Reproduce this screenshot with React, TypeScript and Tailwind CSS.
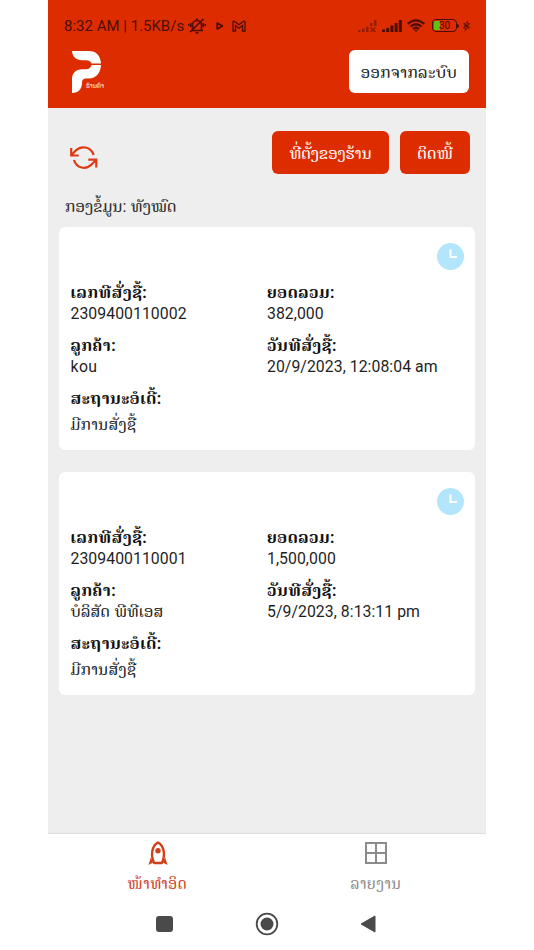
import type { ReactNode } from "react";

const orders = [
  {
    id: "2309400110002",
    total: "382,000",
    customer: "kou",
    date: "20/9/2023, 12:08:04 am",
    status: "ມີການສັ່ງຊື້",
  },
  {
    id: "2309400110001",
    total: "1,500,000",
    customer: "ບໍລິສັດ ພີທີເອສ",
    date: "5/9/2023, 8:13:11 pm",
    status: "ມີການສັ່ງຊື້",
  },
];

const StatusBar = () => {
  return (
    <div className="flex h-[50px] items-center justify-between pl-4 pr-4 pt-px text-[#4d0d02]">
      <div className="flex items-center">
        <span className="w-[121px] whitespace-nowrap text-[15px] leading-5">
          8:32 AM | 1.5KB/s
        </span>
        <svg
          className="ml-[3px] h-[18px] w-[18px]"
          viewBox="0 0 18 18"
          fill="none"
          stroke="currentColor"
          strokeWidth="1.6"
        >
          <path d="M4.5 13V8a4.5 4.5 0 0 1 9 0v5M3 13.5h12M7.5 15.8h3M9 1.5v2M2 15 15.5 2M2.7 6v4M15.3 6v4M.7 7v2M17.3 7v2" />
        </svg>
        <svg className="ml-[10px] h-2 w-2" viewBox="0 0 8 8" fill="none">
          <path
            d="M1.2 1 6.5 4 1.2 7Z"
            stroke="currentColor"
            strokeWidth="1.7"
            strokeLinejoin="round"
          />
        </svg>
        <svg
          className="ml-[8px] h-3 w-3.5"
          viewBox="0 0 14 12"
          fill="none"
          stroke="currentColor"
          strokeWidth="1.3"
        >
          <path d="M1 11V2q0-1 1.5-.7L7 4.8l4.5-3.5Q13 1 13 2v9h-2.5V5.5L7 8.2 3.500 5.500V11Z" />
        </svg>
      </div>
      <div className="flex items-center">
        <svg
          className="h-3 w-[19px] opacity-50"
          viewBox="0 0 19 12"
          fill="currentColor"
        >
          <path d="M0 10h2.5v2H0zM4 8.5h2.5V12H4zM8 6.5h2.5V12H8zM12 3h2.5v3H12zM16 0h2.5v6H16z" />
          <path
            d="m12.5 7.5 5 4.500m0-4.500-5 4.500"
            stroke="currentColor"
            strokeWidth="1.5"
          />
        </svg>
        <svg
          className="ml-[5px] h-3 w-5"
          viewBox="0 0 20 12"
          fill="currentColor"
        >
          <path d="M0 9.500h3V12H0zM4.200 8h3v4h-3zM8.400 5.500h3V12h-3zM12.600 3h3v9h-3zM16.800 0h3v12h-3z" />
        </svg>
        <svg
          className="ml-[5px] h-[13px] w-[18px]"
          viewBox="0 0 18 13"
          fill="none"
          stroke="currentColor"
          strokeWidth="2.2"
        >
          <path d="M.7 4.8Q9-2.2 17.3 4.8M3.5 7.5q5.5-4.5 11 0M6 10q3-2.4 6 0" />
          <path d="m7.2 11 1.8 2 1.8-2Z" fill="currentColor" stroke="none" />
        </svg>
        <div className="ml-[7px] flex h-[13px] w-[25px] items-center rounded border-[1.5px] border-[#4d0d02] p-px">
          <span className="flex h-full w-[6px] items-center bg-[#63c010]">
            <span className="pl-[5px] text-[10px] leading-none">30</span>
          </span>
        </div>
        <span className="h-1 w-[2px] rounded-r bg-[#4d0d02]" />
        <svg
          className="ml-[4px] h-3 w-[7px]"
          viewBox="0 0 7 12"
          fill="currentColor"
        >
          <path d="M5 0 .8 6.500h2L1.500 12 6.200 5.500h-2ZM.5 3.300h6.300v1.300H.5zM.3 7.200h6.300v1.300H.3z" />
        </svg>
      </div>
    </div>
  );
};

const Logo = () => {
  return (
    <div className="relative h-[43px] w-9 text-white">
      <svg className="h-[43px] w-9" viewBox="0 0 36 43" fill="currentColor">
        <path d="M0 1h17c7 0 11.500 4.500 12 12.500H19.500C19 11.500 17 10.200 14 10.200H10C4 10.200.5 7 0 1Z" />
        <path d="M29 15c-.4 8-5 13.500-12 13.500h-3c-2.500 0-4 1.500-4 4 0 6-3 10.500-10 10.500V29c0-6 4-9.800 10-9.800h4c3 0 5-1.700 5.500-4.200Z" />
      </svg>
      <span className="absolute left-3.5 top-8 whitespace-nowrap text-[7px] leading-[9px]">
        ຮ້ານຄ້າ
      </span>
    </div>
  );
};

const Field = ({
  label,
  gap = "",
  children,
}: {
  label: string;
  gap?: string;
  children: ReactNode;
}) => {
  return (
    <div>
      <dt className="text-[15.8px] font-bold leading-5 tracking-[0.5px] text-[#111111]">
        {label}
      </dt>
      <dd
        className={`text-[15.8px] leading-[21px] tracking-[0.05px] text-[#1f1f1f] ${gap}`}
      >
        {children}
      </dd>
    </div>
  );
};

const OrderCard = ({ order }: { order: (typeof orders)[number] }) => {
  return (
    <li className="h-[223px] rounded-md bg-white pl-[11.5px] pr-[11px] pt-4">
      <div className="flex justify-end">
        <svg className="h-[27px] w-[27px]" viewBox="0 0 27 27" fill="none">
          <circle cx="13.5" cy="13.5" r="13.5" fill="#b3e5fc" />
          <path d="M13.5 6.5V14H20" stroke="white" strokeWidth="2" />
        </svg>
      </div>
      <dl className="mt-[13px] grid grid-cols-[196.5px_1fr] gap-y-3 whitespace-nowrap">
        <Field label="ເລກທີສັ່ງຊື້:">{order.id}</Field>
        <Field label="ຍອດລວມ:">{order.total}</Field>
        <Field label="ລູກຄ້າ:">
          <span className="tracking-[0.4px]">{order.customer}</span>
        </Field>
        <Field label="ວັນທີສັ່ງຊື້:">{order.date}</Field>
        <Field label="ສະຖານະອໍເດີ້:" gap="mt-[5px]">
          <span className="tracking-[0.5px]">{order.status}</span>
        </Field>
      </dl>
    </li>
  );
};

export default function App() {
  return (
    <div className="h-[950px] w-[534px] overflow-hidden bg-white pl-12 font-['Roboto','Noto_Serif_Lao','Noto_Sans_Lao','DejaVu_Sans',sans-serif]">
      <div className="flex h-full w-[438px] flex-col bg-[#eeeeee]">
        <header className="h-[108px] shrink-0 bg-[#dd2c00]">
          <StatusBar />
          <div className="flex justify-between pl-6 pr-[17px]">
            <Logo />
            <button className="h-[43px] w-[120px] whitespace-nowrap rounded-md bg-white pt-0.5 text-[16px] tracking-[0.5px] text-[#212121]">
              ອອກຈາກລະບົບ
            </button>
          </div>
        </header>

        <main className="flex-1 px-[11px] pt-[23px]">
          <div className="flex items-start pl-[11px] pr-[5px]">
            <svg
              className="mt-[13px] h-7 w-7"
              viewBox="0 0 28 28"
              fill="none"
              stroke="#dd3a12"
              strokeWidth="2.2"
            >
              <path d="M1.2 4v7.5h7.5M1.2 11.5 5.5 6.8C11 1 21 2.5 23.6 11M26.300 23.500v-7.800h-8M26.300 15.700 21.500 20.500C16 26 6.500 24.500 4 16" />
            </svg>
            <button className="ml-auto h-[43px] w-[117px] whitespace-nowrap rounded-md bg-[#dd2c00] pt-0.5 text-[16px] tracking-[0.15px] text-white">
              ທີ່ຕັ້ງຂອງຮ້ານ
            </button>
            <button className="ml-[11px] h-[43px] w-[70px] whitespace-nowrap rounded-md bg-[#dd2c00] pt-0.5 text-[16px] tracking-[0.3px] text-white">
              ຕິດໜີ້
            </button>
          </div>
          <p className="mt-[23px] pl-1.5 text-[16px] leading-5 tracking-[0.25px] text-[#2b2b2b]">
            ກອງຂໍ້ມູນ: ທັງໝົດ
          </p>
          <ul className="mt-[10px] space-y-[22px]">
            {orders.map((order) => (
              <OrderCard key={order.id} order={order} />
            ))}
          </ul>
        </main>

        <nav className="grid h-[66px] shrink-0 grid-cols-2 border-t border-[#dedede] bg-white text-[15px]">
          <div className="flex flex-col items-center pt-[7px] text-[#d0401a]">
            <svg className="h-6 w-5" viewBox="0 0 20 24" fill="none">
              <path
                d="M6.2 22C2.2 14 4 4.500 10 1.500c6 3 7.800 12.500 3.800 20.500Z"
                stroke="currentColor"
                strokeWidth="2.4"
                strokeLinejoin="round"
              />
              <circle cx="10" cy="9.800" r="2.700" fill="currentColor" />
              <path
                d="M2.800 16.500 5.200 21.500.500 24ZM17.200 16.500 14.800 21.500l4.700 2.500Z"
                fill="currentColor"
              />
            </svg>
            <span className="mt-[9px] leading-5 tracking-[0.8px]">
              ໜ້າທຳອິດ
            </span>
          </div>
          <div className="flex flex-col items-center pr-px pt-[7px] text-[#8b8b8b]">
            <svg
              className="h-6 w-6"
              viewBox="0 0 24 24"
              fill="none"
              stroke="currentColor"
              strokeWidth="2"
            >
              <path d="M2 2h20v20H2ZM12 2v20M2 12h20" />
            </svg>
            <span className="mt-[9px] leading-5 tracking-[0.7px]">ລາຍງານ</span>
          </div>
        </nav>

        <div className="flex h-[51px] shrink-0 items-center bg-white pb-0.5 text-[#4a4a4a]">
          <span className="ml-[108px] h-4 w-[17px] rounded-[3px] bg-[#4a4a4a]" />
          <svg className="ml-[82px] h-6 w-6" viewBox="0 0 24 24" fill="none">
            <circle
              cx="12"
              cy="12"
              r="10.3"
              stroke="currentColor"
              strokeWidth="1.8"
            />
            <circle cx="12" cy="12" r="6.5" fill="currentColor" />
          </svg>
          <svg className="ml-[81px] h-5 w-4" viewBox="0 0 16 20">
            <path
              d="M15 2v16L1 10Z"
              fill="currentColor"
              stroke="currentColor"
              strokeLinejoin="round"
            />
          </svg>
        </div>
      </div>
    </div>
  );
}
